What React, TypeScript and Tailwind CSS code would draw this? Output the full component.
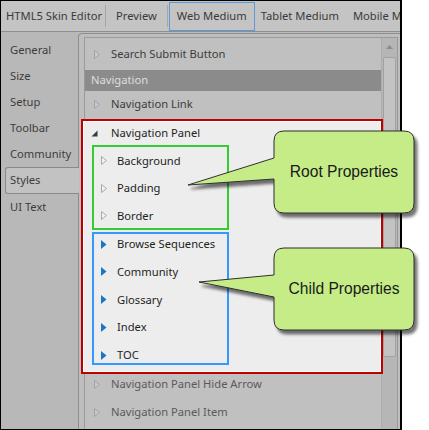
import React from "react";

const font = { fontFamily: '"Noto Sans", "Open Sans", sans-serif' };

function Hollow({ light = false }: { light?: boolean }) {
  return (
    <svg width="6" height="9" viewBox="0 0 6 9" className="shrink-0">
      <path d="M0.5 0.5 L5.5 4.5 L0.5 8.5 Z" fill={light ? "#f2f2f2" : "#c9c9c9"} stroke={light ? "#a8a8a8" : "#a3a3a3"} strokeWidth="1" />
    </svg>
  );
}

function BlueTri() {
  return (
    <svg width="6" height="9" viewBox="0 0 6 9" className="shrink-0">
      <path d="M0 0 L5.5 4.5 L0 9 Z" fill="#1b76c4" />
    </svg>
  );
}

function Expanded() {
  return (
    <svg width="7" height="7" viewBox="0 0 7 7" className="shrink-0">
      <path d="M6.5 0.5 L6.5 6.5 L0.5 6.5 Z" fill="#3a3a3a" />
    </svg>
  );
}

function Callouts() {
  const root =
    "M284 131 H404 Q414 131 414 141 V203 Q414 213 404 213 H284 Q274 213 274 203 V179 L188 185 L274 158 V141 Q274 131 284 131 Z";
  const child =
    "M284 248 H404 Q414 248 414 258 V320 Q414 330 404 330 H284 Q274 330 274 320 V297 L199 282 L274 275 V258 Q274 248 284 248 Z";
  return (
    <div className="absolute inset-0 pointer-events-none z-50">
      <svg width="429" height="430" viewBox="0 0 429 430" className="absolute left-0 top-0">
        <defs>
          <filter id="ds" x="-10%" y="-10%" width="130%" height="140%">
            <feDropShadow dx="3" dy="4" stdDeviation="1.6" floodColor="#000" floodOpacity="0.55" />
          </filter>
        </defs>
        <path d={root} fill="#c5ec86" stroke="#2f2f2f" strokeWidth="1" filter="url(#ds)" />
        <path d={child} fill="#c5ec86" stroke="#2f2f2f" strokeWidth="1" filter="url(#ds)" />
      </svg>
      <div
        className="absolute left-[274px] top-[131px] w-[140px] h-[82px] flex items-center justify-center text-[15.6px] text-[#1a1a1a]"
        style={{ fontFamily: '"Liberation Sans", Arial, sans-serif' }}
      >
        Root Properties
      </div>
      <div
        className="absolute left-[274px] top-[248px] w-[140px] h-[82px] flex items-center justify-center text-[15.6px] text-[#1a1a1a]"
        style={{ fontFamily: '"Liberation Sans", Arial, sans-serif' }}
      >
        Child Properties
      </div>
    </div>
  );
}

function OuterRow({ label, cls = "text-[#3c3c3c]" }: { label: string; cls?: string }) {
  return (
    <div className="h-[26px] flex items-center pl-[9px] shrink-0">
      <Hollow />
      <span className={`ml-[11px] text-[11.2px] leading-[16px] whitespace-nowrap ${cls}`}>{label}</span>
    </div>
  );
}

export default function App() {
  const nav = ["General", "Size", "Setup", "Toolbar", "Community"];
  return (
    <div className="w-[429px] h-[430px] bg-white relative overflow-hidden" style={font}>
      <div className="w-[402px] h-[430px] border-l border-t border-b border-r-2 border-black bg-[#bcbcbc] flex flex-col overflow-hidden">
        {/* tab bar */}
        <div className="h-[31px] shrink-0 flex items-center bg-[#c4c4c4] border-b border-[#8e8e8e] text-[11.2px] text-[#3a3a3a] whitespace-nowrap overflow-hidden">
          <div className="pl-[5px] pr-[3px] border-r border-[#a6a6a6] h-[22px] flex items-center">HTML5 Skin Editor</div>
          <div className="pl-[10px] pr-[10px] border-r border-[#a6a6a6] h-[22px] flex items-center">Preview</div>
          <div className="ml-[1px] self-stretch mt-[1px] px-[7px] border border-[#5d9bd6] flex items-center">Web Medium</div>
          <div className="pl-[6px] pr-[8px] flex items-center">Tablet Medium</div>
          <div className="pl-[6px] flex items-center">Mobile M</div>
        </div>
        <div className="flex flex-1 min-h-0">
          {/* left nav */}
          <div className="w-[77px] shrink-0 pt-[5px] flex flex-col text-[11.2px] text-[#3c3c3c] bg-[#b8b8b8]">
            {nav.map((n) => (
              <div key={n} className="h-[26px] flex items-center pl-[9px] whitespace-nowrap">
                {n}
              </div>
            ))}
            <div className="h-[27px] ml-[4px] mr-[-1px] flex items-center pl-[4px] border border-r-0 border-[#8a8a8a] rounded-l-[3px] bg-[#c2c2c2] relative z-10">
              Styles
            </div>
            <div className="h-[26px] flex items-center pl-[9px] whitespace-nowrap">UI Text</div>
          </div>
          {/* panel */}
          <div className="flex-1 mt-[1px] border-l border-t border-[#8d8d8d] rounded-tl-[4px] pl-[5px] pt-[3px] pr-[2px] bg-[#bebebe] flex min-w-0">
            <div className="flex-1 border-l border-t border-r border-[#9a9a9a] flex min-w-0">
              <div className="flex-1 flex flex-col pt-[3px] bg-[#c0c0c0] min-w-0">
                <OuterRow label="Search Submit Button" />
                <div className="mt-[3px] h-[21px] shrink-0 bg-[#8b8b8b] flex items-center pl-[6px] text-[11.2px] text-[#dedede]">
                  Navigation
                </div>
                <OuterRow label="Navigation Link" />
                {/* red box */}
                <div className="mt-[2px] ml-[-4px] w-[302px] h-[255px] shrink-0 border-2 border-[#c00000] bg-[#ededed] shadow-[inset_0_0_0_1px_#ffffff] relative z-10 flex flex-col">
                  <div className="h-[24px] flex items-center pl-[8px] shrink-0">
                    <Expanded />
                    <span className="ml-[13px] text-[11.2px] leading-[16px] text-[#1e1e1e]">Navigation Panel</span>
                  </div>
                  <div className="ml-[9px] w-[137px] h-[85px] shrink-0 border-2 border-[#33cc33] flex flex-col">
                    {["Background", "Padding", "Border"].map((t) => (
                      <div key={t} className="h-[27.5px] flex items-center pl-[7px] shrink-0">
                        <Hollow light />
                        <span className="ml-[10px] text-[11.2px] leading-[16px] text-[#1e1e1e] whitespace-nowrap">{t}</span>
                      </div>
                    ))}
                  </div>
                  <div className="mt-[2px] ml-[9px] w-[137px] h-[133px] shrink-0 border-2 border-[#3399ff] flex flex-col">
                    {["Browse Sequences", "Community", "Glossary", "Index", "TOC"].map((t) => (
                      <div key={t} className="h-[27.75px] flex items-start pt-[2px] pl-[7px] shrink-0">
                        <div className="h-[16px] flex items-center">
                          <BlueTri />
                        </div>
                        <span className="ml-[10px] text-[11.2px] leading-[16px] text-[#1e1e1e] whitespace-nowrap">{t}</span>
                      </div>
                    ))}
                  </div>
                </div>
                {["Navigation Panel Hide Arrow", "Navigation Panel Item"].map((t) => (
                  <div key={t} className="h-[28px] flex items-start pt-[2px] pl-[9px] shrink-0">
                    <div className="h-[16px] flex items-center">
                      <Hollow />
                    </div>
                    <span className="ml-[11px] text-[11.2px] leading-[16px] text-[#5a5a5a] whitespace-nowrap">{t}</span>
                  </div>
                ))}
              </div>
              {/* scrollbar */}
              <div className="w-[16px] shrink-0 bg-[#b6b6b6] border-l border-[#adadad] flex flex-col items-center">
                <svg width="7" height="4" viewBox="0 0 7 4" className="mt-[7px]">
                  <path d="M0 4 L3.5 0 L7 4 Z" fill="#8c8c8c" />
                </svg>
                <div className="mt-[8px] w-[13px] h-[300px] rounded-[2px] border border-[#a2a2a2] bg-[#c3c3c3]" />
              </div>
            </div>
          </div>
        </div>
      </div>
      <Callouts />
    </div>
  );
}
